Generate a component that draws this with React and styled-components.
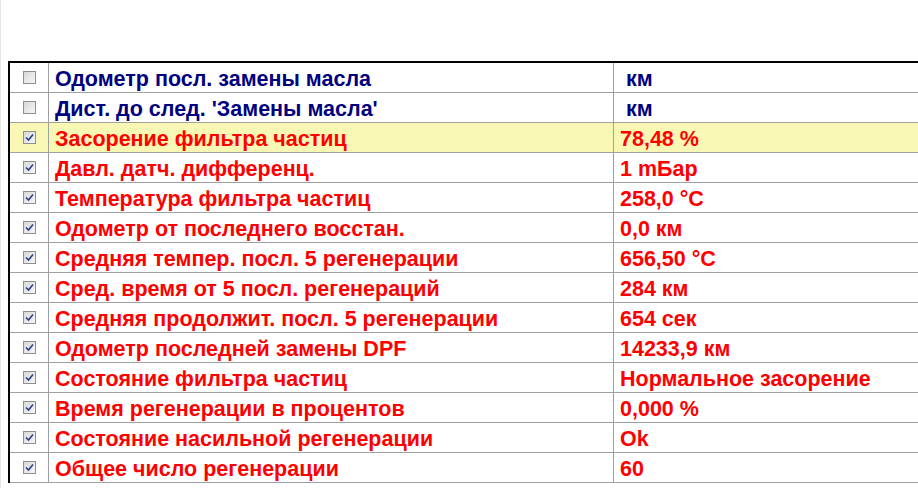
import React from "react";
import styled, { createGlobalStyle } from "styled-components";

const GlobalStyle = createGlobalStyle`
  html, body {
    margin: 0;
    padding: 0;
    background: #ffffff;
    overflow: hidden;
  }
  body {
    font-family: "Liberation Sans", Arial, sans-serif;
  }
`;

const Page = styled.div`
  width: 918px;
  height: 488px;
  padding: 61px 0 0 7px;
  box-sizing: border-box;
  border-left: 1px solid #e6e6e6;
  overflow: hidden;
`;

const Table = styled.div`
  width: 1000px;
  border-top: 2px solid #000;
  border-left: 2px solid #000;
`;

const Row = styled.div`
  display: grid;
  grid-template-columns: 39px 565px 1fr;
  height: 30px;
  box-sizing: border-box;
  border-bottom: 1px solid #a0a0a0;
  background: ${(p) => (p.$highlight ? "#f8f8b4" : "#ffffff")};
  color: ${(p) => (p.$info ? "#000080" : "#ff0000")};
  font-size: 21.5px;
  font-weight: bold;
`;

const BoxCell = styled.div`
  display: flex;
  align-items: center;
  justify-content: center;
  border-right: 1px solid #a0a0a0;
`;

const TextCell = styled.div`
  display: flex;
  align-items: center;
  padding-left: ${(p) => p.$pad || 6}px;
  padding-top: 4px;
  border-right: ${(p) => (p.$last ? "none" : "1px solid #a0a0a0")};
  white-space: nowrap;
`;

const Check = styled.span`
  width: 11px;
  height: 11px;
  border: 1px solid #8e8f8f;
  background: linear-gradient(135deg, #d8d8d8 0%, #f6f6f6 100%);
  display: flex;
  align-items: center;
  justify-content: center;
`;

const CheckBox = ({ checked }) => (
  <Check>
    {checked && (
      <svg width="9" height="9" viewBox="0 0 9 9">
        <path d="M1 4.5 L3.5 7 L8 1.5" fill="none" stroke="#2a3f8f" strokeWidth="1.6" />
      </svg>
    )}
  </Check>
);

const rows = [
  { label: "Одометр посл. замены масла", value: "км", info: true },
  { label: "Дист. до след. 'Замены масла'", value: "км", info: true },
  { label: "Засорение фильтра частиц", value: "78,48 %", highlight: true },
  { label: "Давл. датч. дифференц.", value: "1 mБар" },
  { label: "Температура фильтра частиц", value: "258,0 °C" },
  { label: "Одометр от последнего восстан.", value: "0,0 км" },
  { label: "Средняя темпер. посл. 5 регенерации", value: "656,50 °C" },
  { label: "Сред. время от 5 посл. регенераций", value: "284 км" },
  { label: "Средняя продолжит. посл. 5 регенерации", value: "654 сек" },
  { label: "Одометр последней замены DPF", value: "14233,9 км" },
  { label: "Состояние фильтра частиц", value: "Нормальное засорение" },
  { label: "Время регенерации в процентов", value: "0,000 %" },
  { label: "Состояние насильной регенерации", value: "Ok" },
  { label: "Общее число регенерации", value: "60" },
];

export default function App() {
  return (
    <Page>
      <GlobalStyle />
      <Table>
        {rows.map((r) => (
          <Row key={r.label} $info={r.info} $highlight={r.highlight}>
            <BoxCell>
              <CheckBox checked={!r.info} />
            </BoxCell>
            <TextCell>{r.label}</TextCell>
            <TextCell $last $pad={r.info ? 12 : 6}>
              {r.value}
            </TextCell>
          </Row>
        ))}
      </Table>
    </Page>
  );
}
